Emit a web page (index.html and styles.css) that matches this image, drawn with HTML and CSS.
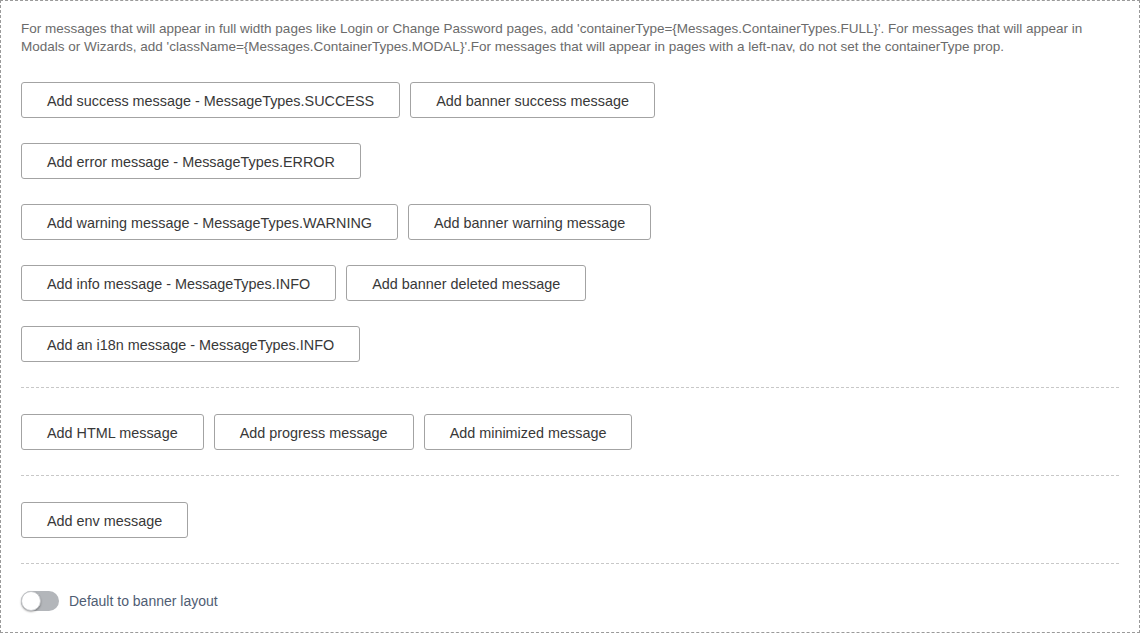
FILE: index.html
```html
<!DOCTYPE html>
<html>
<head>
<meta charset="utf-8">
<link rel="stylesheet" href="styles.css">
</head>
<body>
<div class="panel">
  <p class="note">For messages that will appear in full width pages like Login or Change Password pages, add 'containerType={Messages.ContainerTypes.FULL}'. For messages that will appear in Modals or Wizards, add 'className={Messages.ContainerTypes.MODAL}'.For messages that will appear in pages with a left-nav, do not set the containerType prop.</p>
  <div class="group">
    <div class="row">
      <button class="btn">Add success message - MessageTypes.SUCCESS</button>
      <button class="btn">Add banner success message</button>
    </div>
    <div class="row">
      <button class="btn">Add error message - MessageTypes.ERROR</button>
    </div>
    <div class="row">
      <button class="btn">Add warning message - MessageTypes.WARNING</button>
      <button class="btn">Add banner warning message</button>
    </div>
    <div class="row">
      <button class="btn">Add info message - MessageTypes.INFO</button>
      <button class="btn">Add banner deleted message</button>
    </div>
    <div class="row">
      <button class="btn">Add an i18n message - MessageTypes.INFO</button>
    </div>
  </div>
  <hr class="sep">
  <div class="group">
    <div class="row">
      <button class="btn">Add HTML message</button>
      <button class="btn">Add progress message</button>
      <button class="btn">Add minimized message</button>
    </div>
  </div>
  <hr class="sep">
  <div class="group">
    <div class="row">
      <button class="btn">Add env message</button>
    </div>
  </div>
  <hr class="sep">
  <label class="toggle-row">
    <span class="toggle"><span class="knob"></span></span>
    <span class="toggle-label">Default to banner layout</span>
  </label>
</div>
</body>
</html>
```
FILE: styles.css
```css
html, body {
  margin: 0;
  padding: 0;
  background: #fff;
}
body {
  font-family: "Liberation Sans", Arial, sans-serif;
}
.panel {
  box-sizing: border-box;
  width: 1140px;
  height: 633px;
  border: 1px dashed #9a9a9a;
  padding: 19px 20px 0 20px;
}
.note {
  margin: 0;
  font-size: 13.5px;
  line-height: 18px;
  color: #6b6b6b;
}
.group {
  display: flex;
  flex-direction: column;
  gap: 25px;
  margin-top: 26px;
}
.row {
  display: flex;
  gap: 10px;
}
.btn {
  box-sizing: border-box;
  height: 36px;
  padding: 1px 25px 0;
  background: #fff;
  border: 1px solid #a3a3a3;
  border-radius: 3px;
  font-family: inherit;
  font-size: 14.4px;
  color: #383838;
  cursor: pointer;
}
.sep {
  margin: 25px 0 0 0;
  border: 0;
  border-top: 1px dashed #c8c8c8;
  height: 0;
}
.sep + .group {
  margin-top: 26px;
}
.toggle-row {
  display: flex;
  align-items: center;
  gap: 10px;
  margin-top: 27px;
}
.toggle {
  position: relative;
  width: 38px;
  height: 20px;
  border-radius: 10px;
  background: #b3b6ba;
}
.knob {
  position: absolute;
  left: 0;
  top: 0;
  box-sizing: border-box;
  width: 20px;
  height: 20px;
  border-radius: 50%;
  background: #fff;
  border: 1px solid #c4c6c9;
  box-shadow: 0 1px 2px rgba(0,0,0,0.35);
}
.toggle-label {
  font-size: 14px;
  color: #4f5d73;
}
```
